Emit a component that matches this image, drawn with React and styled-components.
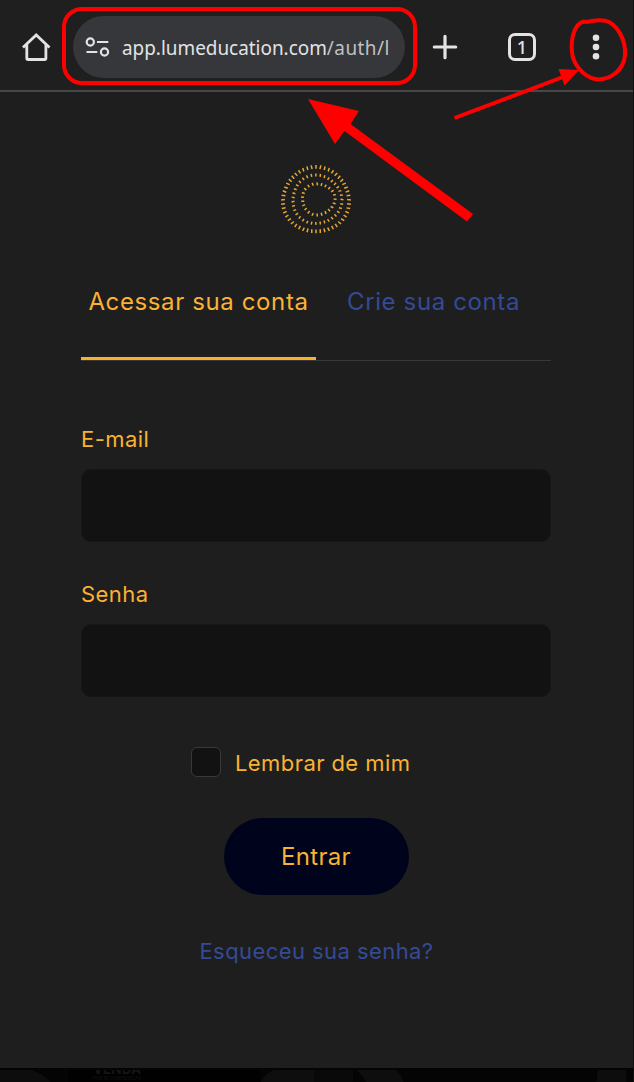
import React from "react";
import styled, { createGlobalStyle } from "styled-components";

const GlobalStyle = createGlobalStyle`
  * { box-sizing: border-box; }
  body {
    margin: 0;
    background: #1f1f1f;
    font-family: Inter, sans-serif;
    overflow: hidden;
  }
`;

const Screen = styled.div`
  position: relative;
  width: 634px;
  height: 1082px;
  display: flex;
  flex-direction: column;
  background: #1e1e1e;
  border-right: 1px solid #101010;
`;

const BrowserBar = styled.header`
  flex: none;
  height: 92px;
  padding: 4px 0 0 21px;
  display: flex;
  align-items: center;
  background: #1f1f1f;
  border-bottom: 2px solid #474747;
  color: #e3e3e3;
`;

const IconButton = styled.button`
  flex: none;
  display: flex;
  padding: 0;
  border: 0;
  background: none;
  color: inherit;
  margin-left: ${(p) => p.$gap || 0}px;
`;

const AddressPill = styled.div`
  flex: none;
  width: 332px;
  height: 62px;
  margin-left: 22px;
  padding-left: 12px;
  display: flex;
  align-items: center;
  border-radius: 31px;
  background: #36373b;
`;

const SiteSettingsIcon = styled.svg`
  flex: none;
`;

const Url = styled.div`
  flex: none;
  width: 284px;
  margin-left: 12px;
  padding-top: 1px;
  white-space: nowrap;
  font: 20px/30px "Noto Sans", sans-serif;
  color: #e3e3e3;
  transform: scaleX(0.945);
  transform-origin: left center;
`;

const UrlPath = styled.span`
  letter-spacing: 0.5px;
  color: #c0c0c2;
`;

const TabCount = styled.div`
  flex: none;
  width: 28px;
  height: 28px;
  margin-left: 50px;
  display: flex;
  align-items: center;
  justify-content: center;
  border: 3px solid #e3e3e3;
  border-radius: 7px;
  font: 500 18px/22px "Noto Sans", sans-serif;
`;

const Page = styled.main`
  flex: none;
  height: 976px;
  padding: 72px 82px 0 81px;
  display: flex;
  flex-direction: column;
  align-items: center;
`;

const Tabs = styled.nav`
  width: 470px;
  height: 94px;
  margin-top: 33px;
  display: flex;
  border-bottom: 1px solid #393939;
`;

const Tab = styled.a`
  flex: 0 0 235px;
  height: 93px;
  padding: 19px 0 0;
  text-align: center;
  white-space: nowrap;
  font-size: 24px;
  line-height: 32px;
  letter-spacing: 0.62px;
  color: ${(p) => (p.$active ? "#f9b233" : "#344a97")};
  border-bottom: ${(p) => (p.$active ? "3px solid #f9b02a" : "0")};
`;

const Form = styled.form`
  width: 470px;
  display: flex;
  flex-direction: column;
  align-items: center;
`;

const Label = styled.label`
  align-self: flex-start;
  margin-top: ${(p) => p.$top}px;
  font-size: 22px;
  line-height: 30px;
  letter-spacing: 0.45px;
  color: #f9b233;
`;

const Input = styled.input`
  width: 470px;
  height: 73px;
  margin-top: 15px;
  padding: 0 20px;
  border: 1px solid #161616;
  border-radius: 10px;
  background: #121212;
  color: #f9b233;
  outline: none;
`;

const Remember = styled.label`
  align-self: flex-start;
  margin: 50px 0 0 110px;
  display: flex;
  align-items: center;
  height: 30px;
  gap: 14px;
  font-size: 22px;
  line-height: 30px;
  letter-spacing: 0.42px;
  color: #f9b233;
`;

const RememberText = styled.span`
  padding-top: 2px;
`;

const Checkbox = styled.input`
  appearance: none;
  width: 30px;
  height: 30px;
  margin: 0;
  border: 1px solid #393939;
  border-radius: 6px;
  background: #121212;
`;

const Submit = styled.button`
  width: 185px;
  height: 77px;
  margin-top: 41px;
  padding: 0;
  border: 0;
  border-radius: 39px;
  background: #00031c;
  color: #f9b233;
  font: 24px/32px Inter, sans-serif;
  letter-spacing: 0.3px;
`;

const Forgot = styled.a`
  margin-top: 41px;
  padding-left: 1px;
  font-size: 22px;
  line-height: 30px;
  letter-spacing: 0.43px;
  color: #344a97;
`;

const Backdrop = styled.div`
  flex: 1;
  overflow: hidden;
  background: #040404;
`;

const Annotations = styled.svg`
  position: absolute;
  inset: 0;
  pointer-events: none;
`;

const rings = [
  { cx: 35, cy: 35.7, rx: 33, ry: 32.2, n: 48, len: 3.8 },
  { cx: 36, cy: 35.5, rx: 24.5, ry: 24.2, n: 35, len: 3 },
  { cx: 37.3, cy: 35.2, rx: 16.3, ry: 15.5, n: 23, len: 3 },
];

function Logo() {
  return (
    <svg width="70" height="70" viewBox="0 0 70 70" stroke="#e6a733" strokeWidth="1.5">
      {rings.map((ring, k) =>
        Array.from({ length: ring.n }, (_, i) => {
          const a = (i / ring.n) * Math.PI * 2;
          const wobble = Math.sin(a * 3 + k) * 0.6;
          const x = ring.cx + (ring.rx + wobble) * Math.cos(a);
          const y = ring.cy + (ring.ry + wobble) * Math.sin(a);
          const tilt = a + 0.12 * Math.cos(i * 1.7);
          const dx = (Math.cos(tilt) * ring.len) / 2;
          const dy = (Math.sin(tilt) * ring.len) / 2;
          return <line key={`${k}-${i}`} x1={x - dx} y1={y - dy} x2={x + dx} y2={y + dy} />;
        })
      )}
    </svg>
  );
}

export default function App() {
  return (
    <Screen>
      <GlobalStyle />
      <BrowserBar>
        <IconButton aria-label="Home">
          <svg width="30" height="30" viewBox="0 0 30 30" fill="none" stroke="currentColor" strokeWidth="2.8" strokeLinejoin="round">
            <path d="M2 15.5 15.2 3 28.5 15.5" strokeLinejoin="miter" />
            <path d="M5.8 12.5V26.2Q5.8 27.5 7.1 27.5H23.6Q24.9 27.5 24.9 26.2V12.5" />
          </svg>
        </IconButton>
        <AddressPill>
          <SiteSettingsIcon width="25" height="22" viewBox="0 0 25 22" fill="none" stroke="#e3e3e3" strokeWidth="2.2">
            <circle cx="5.3" cy="6" r="3.6" />
            <path d="M12 6H23.3M1.5 16H12.3" />
            <circle cx="19.5" cy="16" r="3.6" />
          </SiteSettingsIcon>
          <Url>
            app.lumeducation.com<UrlPath>/auth/l</UrlPath>
          </Url>
        </AddressPill>
        <IconButton aria-label="+" $gap={27}>
          <svg width="26" height="26" viewBox="0 0 26 26" stroke="currentColor" strokeWidth="3.2" strokeLinecap="round">
            <path d="M13 2.3V23.7M2.3 13H23.7" />
          </svg>
        </IconButton>
        <TabCount>1</TabCount>
        <IconButton aria-label="Menu" $gap={56}>
          <svg width="8" height="28" viewBox="0 0 8 28" fill="currentColor">
            <circle cx="4" cy="4.7" r="3.3" />
            <circle cx="4" cy="14" r="3.3" />
            <circle cx="4" cy="23.2" r="3.3" />
          </svg>
        </IconButton>
      </BrowserBar>

      <Page>
        <Logo />
        <Tabs>
          <Tab $active>Acessar sua conta</Tab>
          <Tab>Crie sua conta</Tab>
        </Tabs>
        <Form>
          <Label htmlFor="email" $top={63}>E-mail</Label>
          <Input id="email" />
          <Label htmlFor="password" $top={37}>Senha</Label>
          <Input id="password" type="password" />
          <Remember>
            <Checkbox type="checkbox" />
            <RememberText>Lembrar de mim</RememberText>
          </Remember>
          <Submit type="button">Entrar</Submit>
          <Forgot>Esqueceu sua senha?</Forgot>
        </Form>
      </Page>

      <Backdrop>
        <svg width="633" height="14" viewBox="0 0 633 14">
          <path d="M0 0H32Q45 5 52 14H0Z" fill="#0d0d0d" />
          <rect x="68" width="192" height="14" fill="#010101" />
          <text x="93" y="4" fontSize="14" fontWeight="700" fill="#141414" textLength="48" lengthAdjust="spacingAndGlyphs">VENDA</text>
          <text x="93" y="10" fontSize="4.5" fill="#131313">POR RECOMENDAÇÃO</text>
          <path d="M260 14Q264 4 274 0H314V14Z" fill="#0e0e0e" />
          <path d="M314 0H353V14H314Z" fill="#090909" />
          <path d="M356 0H396Q402 6 404 14H367Q363 5 356 0Z" fill="#0e0e0e" />
          <path d="M598 0H626V14H596Z" fill="#0d0d0d" />
        </svg>
      </Backdrop>

      <Annotations width="634" height="230" viewBox="0 0 634 230">
        <rect x="64" y="9" width="351" height="74" rx="18" fill="none" stroke="#f00" strokeWidth="4" />
        <path d="M308 99 359 111 350.5 124 473 214 467 221.5 344.5 131 335 144Z" fill="#f00" />
        <path d="M454.5 118 563 77" stroke="#f00" strokeWidth="4" fill="none" />
        <path d="M558.5 69 579 70 564.5 85.5Z" fill="#f00" />
        <path
          d="M586 22C593 20.5 603 19 609 22C618 27 626 40 625 55C624 69 612 79 599 79.5C587 79 577 69 573 58C570 45 572 24 584 21.5"
          fill="none"
          stroke="#f00"
          strokeWidth="4"
          strokeLinecap="round"
        />
      </Annotations>
    </Screen>
  );
}
